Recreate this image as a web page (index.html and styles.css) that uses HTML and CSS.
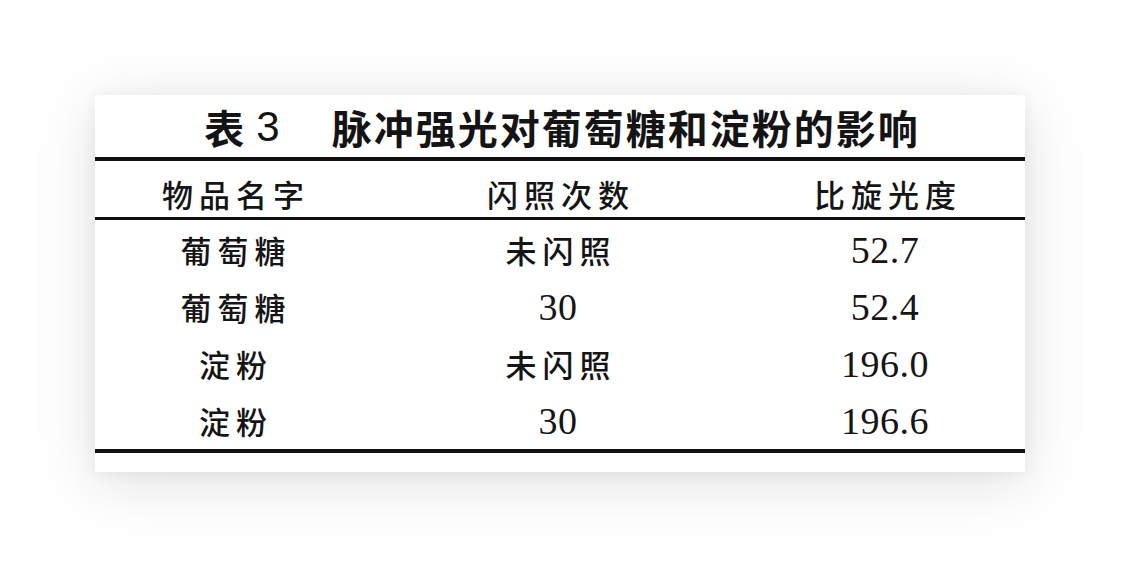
FILE: index.html
```html
<!DOCTYPE html>
<html lang="zh">
<head>
<meta charset="utf-8">
<title>表3 脉冲强光对葡萄糖和淀粉的影响</title>
<link rel="stylesheet" href="styles.css">
</head>
<body>
<div class="page">
  <div class="card">
    <div class="title"><span class="tlabel">表</span><span class="tno">3</span><span class="tname">脉冲强光对葡萄糖和淀粉的影响</span></div>
    <div class="rule thick"></div>
    <div class="row head">
      <div class="cell cjk">物品名字</div>
      <div class="cell cjk">闪照次数</div>
      <div class="cell cjk">比旋光度</div>
    </div>
    <div class="rule thin"></div>
    <div class="body">
      <div class="row">
        <div class="cell cjk">葡萄糖</div>
        <div class="cell cjk">未闪照</div>
        <div class="cell num">52.7</div>
      </div>
      <div class="row">
        <div class="cell cjk">葡萄糖</div>
        <div class="cell num">30</div>
        <div class="cell num">52.4</div>
      </div>
      <div class="row">
        <div class="cell cjk">淀粉</div>
        <div class="cell cjk">未闪照</div>
        <div class="cell num">196.0</div>
      </div>
      <div class="row">
        <div class="cell cjk">淀粉</div>
        <div class="cell num">30</div>
        <div class="cell num">196.6</div>
      </div>
    </div>
    <div class="rule thick"></div>
  </div>
</div>
</body>
</html>
```

FILE: styles.css
```css
html, body {
  margin: 0;
  padding: 0;
  background: #ffffff;
}

.page {
  width: 1138px;
  height: 583px;
  padding: 95px 0 0 95px;
  box-sizing: border-box;
  background: #ffffff;
}

.card {
  width: 930px;
  height: 377px;
  background: #ffffff;
  box-shadow: 0 10px 60px rgba(0, 0, 0, 0.13), 0 2px 14px rgba(0, 0, 0, 0.05);
  display: flex;
  flex-direction: column;
  color: #111111;
}

.title {
  height: 62px;
  line-height: 62px;
  font-family: "Noto Sans CJK SC", "Liberation Sans", sans-serif;
  font-weight: 700;
  font-size: 40px;
  color: #141414;
  display: flex;
  justify-content: center;
  align-items: center;
  padding-left: 4px;
  padding-top: 2px;
  box-sizing: border-box;
}

.tlabel {
  margin-right: 12px;
}

.tno {
  font-family: "Liberation Sans", sans-serif;
  font-weight: 400;
  font-size: 42px;
  margin-right: 52px;
}

.tname {
  letter-spacing: 2px;
}

.rule {
  background: #111111;
  width: 100%;
}

.rule.thick {
  height: 4px;
}

.rule.thin {
  height: 3px;
}

.row {
  display: grid;
  grid-template-columns: 276px 374px 280px;
  height: 57px;
  align-items: center;
}

.row.head {
  height: 56px;
  padding-top: 8px;
  box-sizing: border-box;
}

.body {
  padding-top: 1px;
}

.cell {
  text-align: center;
}

.cjk {
  font-family: "Noto Sans CJK SC", sans-serif;
  font-size: 31px;
  font-weight: 500;
  letter-spacing: 6px;
  text-indent: 6px;
  color: #151515;
}

.num {
  font-family: "Liberation Serif", serif;
  font-size: 38px;
  color: #151515;
  letter-spacing: 0.5px;
}
```
